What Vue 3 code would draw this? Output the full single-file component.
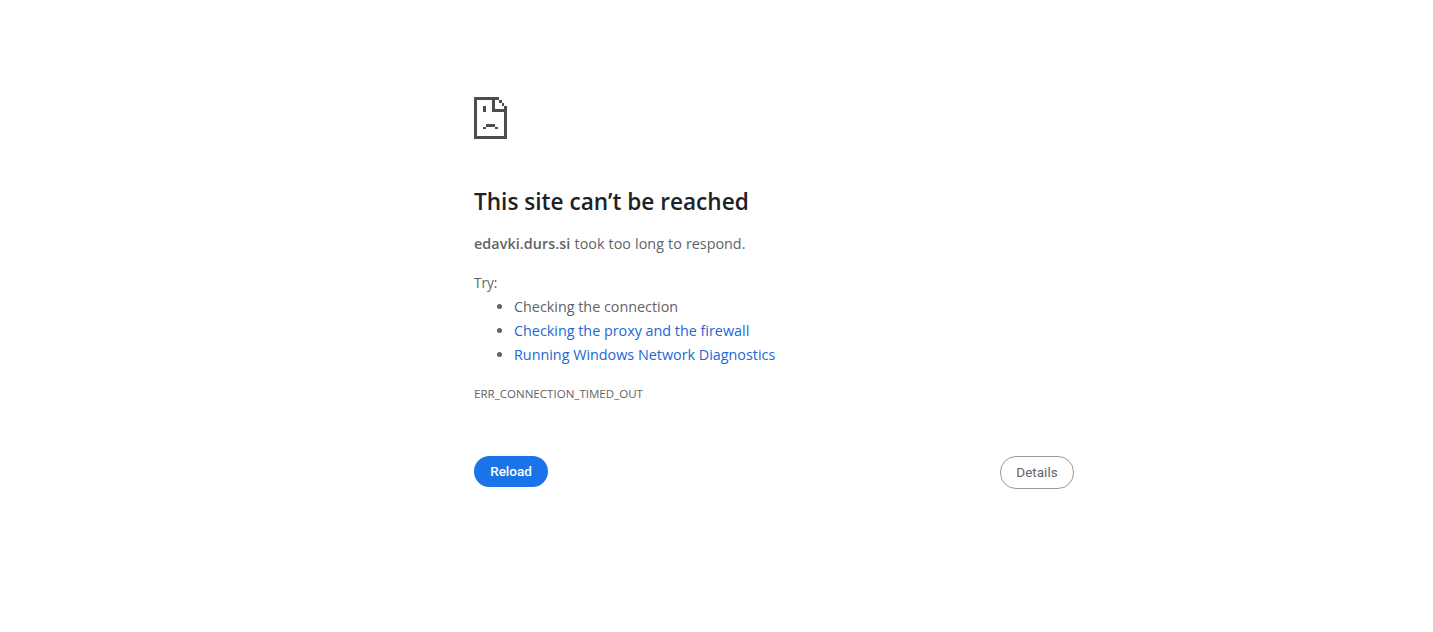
<template>
  <div class="page">
    <main class="panel">
      <svg class="sad-icon" width="33" height="42" viewBox="0 0 33 42" aria-hidden="true">
        <path fill="#4d4d4d" d="M0 0h25v3H3v36h27V9h3v33H0zM25 3h3v3h-3zM28 6h2v3h-2zM18 3h3v9h12v3H18zM9 9h3v6H9zM12 27h9v3h-9zM9 30h3v2H9zM21 30h3v2h-3z"/>
      </svg>
      <h1 class="title">This site can’t be reached</h1>
      <p class="summary"><strong>edavki.durs.si</strong> took too long to respond.</p>
      <div class="try">Try:</div>
      <ul class="suggestions">
        <li>Checking the connection</li>
        <li><a href="#" class="link">Checking the proxy and the firewall</a></li>
        <li><a href="#" class="link">Running Windows Network Diagnostics</a></li>
      </ul>
      <div class="code">ERR_CONNECTION_TIMED_OUT</div>
      <div class="actions">
        <button class="btn primary">Reload</button>
        <button class="btn secondary">Details</button>
      </div>
    </main>
  </div>
</template>

<script setup>
</script>

<style>
html, body {
  margin: 0;
  background: #fff;
}
</style>

<style scoped>
.page {
  height: 632px;
  box-sizing: border-box;
  padding: 97px 0 0 474px;
  font-family: "Open Sans", "Noto Sans", sans-serif;
  color: #5f6368;
}
.panel {
  width: 600px;
  display: flex;
  flex-direction: column;
}
.sad-icon {
  display: block;
}
.title {
  margin: 46px 0 0;
  font-size: 22.6px;
  line-height: 33px;
  font-weight: 600;
  color: #202124;
}
.summary {
  margin: 14px 0 0;
  font-size: 14.35px;
  line-height: 24px;
  word-spacing: 0.4px;
}
.summary strong {
  font-weight: 600;
  letter-spacing: 0.07px;
}
.try {
  margin-top: 15px;
  font-size: 13.6px;
  line-height: 24px;
}
.suggestions {
  margin: 0;
  padding-left: 40px;
  font-size: 14.35px;
  line-height: 24px;
}
.link {
  color: #2068d6;
  text-decoration: none;
}
.code {
  margin-top: 19px;
  font-size: 11.55px;
  line-height: 16px;
}
.actions {
  margin-top: 54px;
  display: flex;
  justify-content: space-between;
  align-items: flex-start;
}
.btn {
  width: 74px;
  font-family: Roboto, sans-serif;
  font-size: 13.5px;
  border-radius: 16px;
  cursor: pointer;
  padding: 0 0 2px;
}
.primary {
  height: 31px;
  background: #1a73e8;
  color: #fff;
  border: none;
  font-weight: 500;
}
.secondary {
  height: 33px;
  background: #fff;
  color: #5f6368;
  border: 1px solid #9a9a9a;
}
</style>
